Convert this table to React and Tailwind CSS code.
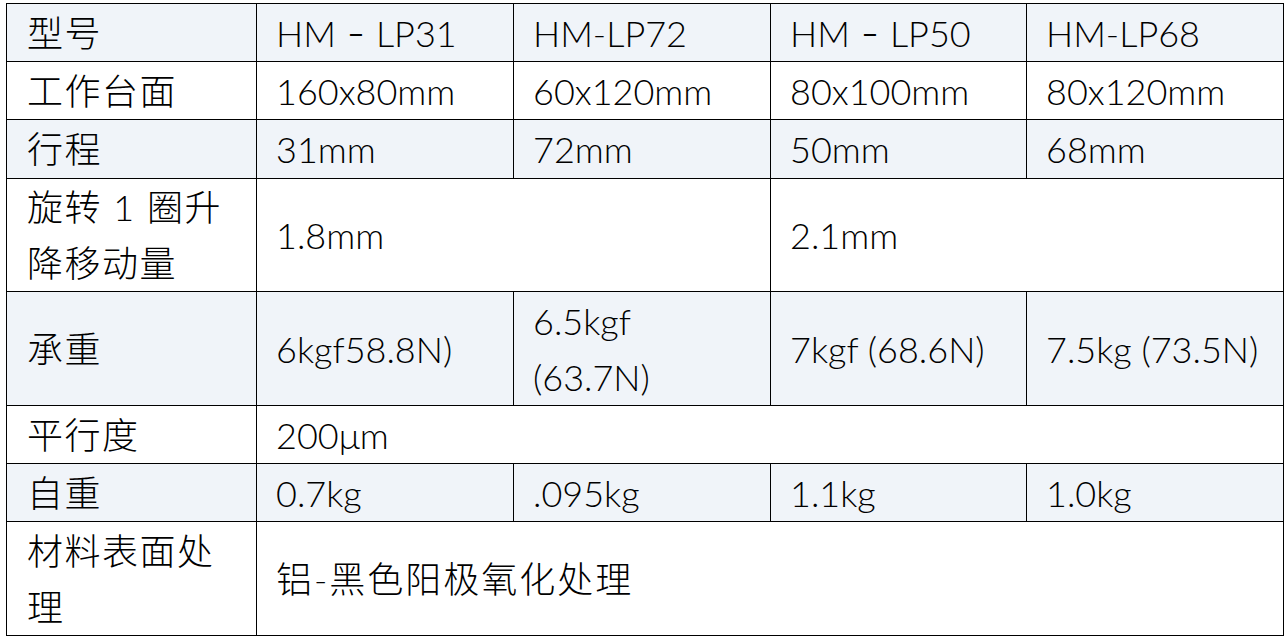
export default function App() {
  const font = { fontFamily: '"Lato", "Noto Sans CJK SC", sans-serif' };
  const base = "border border-black pr-1 align-middle text-[36px] leading-[56px] text-black font-light whitespace-nowrap";
  const td = base + " pl-[19px]";
  const th = base + " pl-5 tracking-[1.5px]";
  const blue = "bg-[#f0f4f9]";
  const Dash = () => (
    <span className="inline-block w-[40px] text-center text-[30px] font-normal align-[3px]">–</span>
  );
  return (
    <div className="bg-white w-[1286px] h-[638px] pt-[3px] pl-[6px]" style={font}>
      <table className="table-fixed border-collapse w-[1278px]">
        <colgroup>
          <col className="w-[250px]" />
          <col className="w-[257px]" />
          <col className="w-[257px]" />
          <col className="w-[256px]" />
          <col className="w-[257px]" />
        </colgroup>
        <tbody>
          <tr className={`h-[58px] ${blue}`}>
            <td className={th}>型号</td>
            <td className={td}>HM<Dash />LP31</td>
            <td className={td}>HM-LP72</td>
            <td className={td}>HM<Dash />LP50</td>
            <td className={td}>HM-LP68</td>
          </tr>
          <tr className="h-[58px] bg-white">
            <td className={th}>工作台面</td>
            <td className={td}>160x80mm</td>
            <td className={td}>60x120mm</td>
            <td className={td}>80x100mm</td>
            <td className={td}>80x120mm</td>
          </tr>
          <tr className={`h-[59px] ${blue}`}>
            <td className={th}>行程</td>
            <td className={td}>31mm</td>
            <td className={td}>72mm</td>
            <td className={td}>50mm</td>
            <td className={td}>68mm</td>
          </tr>
          <tr className="h-[113px] bg-white">
            <td className={th}>旋转 1 圈升<br />降移动量</td>
            <td className={td} colSpan={2}>1.8mm</td>
            <td className={td} colSpan={2}>2.1mm</td>
          </tr>
          <tr className={`h-[114px] ${blue}`}>
            <td className={th}>承重</td>
            <td className={td}>6kgf58.8N)</td>
            <td className={td}>6.5kgf<br />(63.7N)</td>
            <td className={td}>7kgf (68.6N)</td>
            <td className={td}>7.5kg (73.5N)</td>
          </tr>
          <tr className="h-[58px] bg-white">
            <td className={th}>平行度</td>
            <td className={td} colSpan={4}>200μm</td>
          </tr>
          <tr className={`h-[58px] ${blue}`}>
            <td className={th}>自重</td>
            <td className={td}>0.7kg</td>
            <td className={td}>.095kg</td>
            <td className={td}>1.1kg</td>
            <td className={td}>1.0kg</td>
          </tr>
          <tr className="h-[114px] bg-white">
            <td className={th}>材料表面处<br />理</td>
            <td className={td + " tracking-[2px]"} colSpan={4}>铝-黑色阳极氧化处理</td>
          </tr>
        </tbody>
      </table>
    </div>
  );
}
